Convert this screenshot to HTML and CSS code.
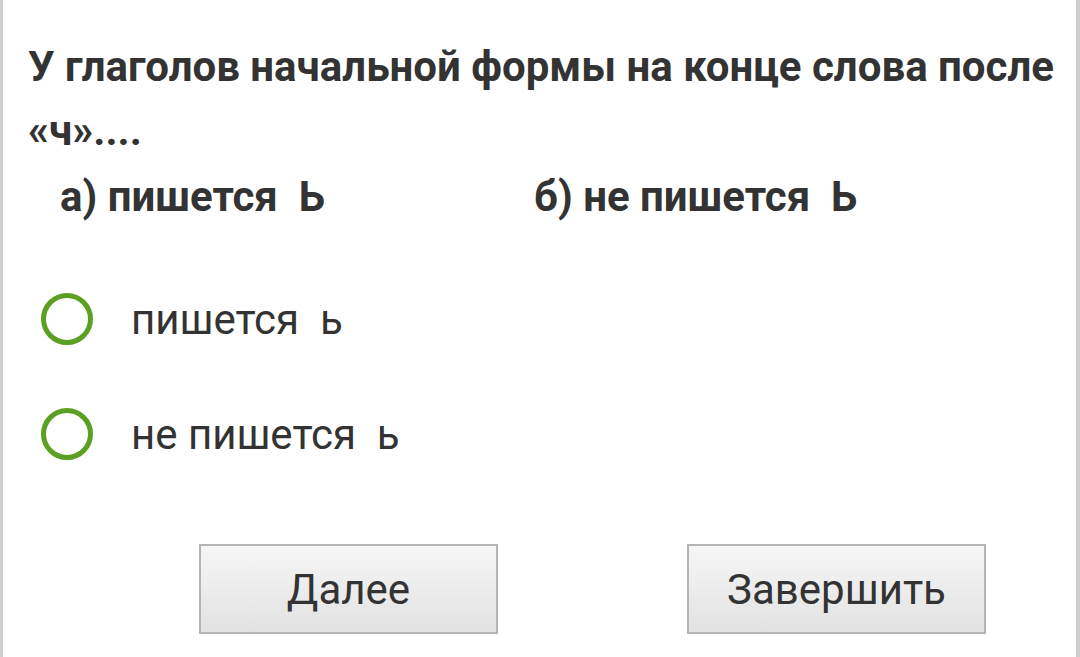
FILE: index.html
```html
<!DOCTYPE html>
<html lang="ru">
<head>
  <meta charset="UTF-8" />
  <meta name="viewport" content="width=device-width, initial-scale=1.0" />
  <title>Тест</title>
  <link rel="stylesheet" href="styles.css">
</head>
<body>
  <div class="quiz">
    <h1 class="question">У глаголов начальной формы на конце слова после «ч»....</h1>
    <div class="variants">
      <span>а) пишется&nbsp; Ь</span>
      <span>б) не пишется&nbsp; Ь</span>
    </div>
    <div class="answers">
      <label class="answer"><span class="radio"></span>пишется&nbsp; ь</label>
      <label class="answer"><span class="radio"></span>не пишется&nbsp; ь</label>
    </div>
    <div class="actions">
      <button class="btn">Далее</button>
      <button class="btn">Завершить</button>
    </div>
  </div>
</body>
</html>
```

FILE: styles.css
```css
/* Base */
* { margin: 0; padding: 0; box-sizing: border-box; }
body {
  font-family: Roboto, "Noto Sans", sans-serif;
  background: #fff;
  color: #333;
}
.quiz {
  height: 657px;
  border-left: 3px solid #cfcfcf;
  border-right: 4px solid #cfcfcf;
  padding-top: 35px;
  overflow: hidden;
}

/* Question */
.question {
  font-size: 42px;
  font-weight: 700;
  line-height: 64px;
  padding-left: 25px;
}
.variants {
  display: grid;
  grid-template-columns: 474px auto;
  padding: 2px 0 0 57px;
  font-size: 42px;
  font-weight: 700;
  line-height: 64px;
}

/* Answers */
.answers {
  display: flex;
  flex-direction: column;
  gap: 51px;
  margin-top: 59px;
  padding-left: 38px;
}
.answer {
  display: flex;
  align-items: center;
  font-size: 42px;
  line-height: 64px;
}
.radio {
  width: 52px;
  height: 52px;
  border: 5px solid #5b9f23;
  border-radius: 50%;
  margin: 0 38px 2px 0;
}

/* Buttons */
.actions {
  display: flex;
  gap: 189px;
  margin-top: 77px;
  padding-left: 196px;
}
.btn {
  width: 299px;
  height: 90px;
  border: 2px solid #b5b5b5;
  background: linear-gradient(#f6f6f6, #e2e2e2);
  font-family: Roboto, sans-serif;
  font-size: 42px;
  color: #333;
}
```
